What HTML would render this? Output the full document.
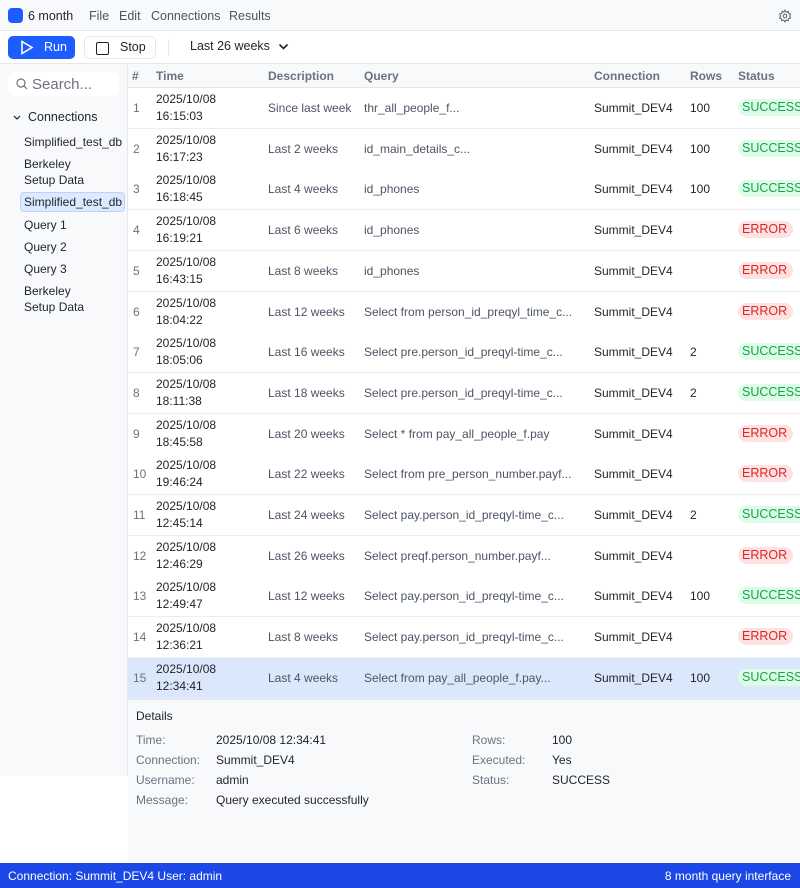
<!DOCTYPE html>
<html><head><meta charset="utf-8"><style>
*{box-sizing:border-box;margin:0;padding:0}
body{width:800px;height:888px;overflow:hidden;font-family:"Liberation Sans",sans-serif;font-size:12px;color:#1f2328;background:#fff;position:relative}
.abs{position:absolute}
#menu{left:0;top:0;width:800px;height:31px;background:#f8f9fb;border-bottom:1px solid #e5e7eb;font-size:12.5px}
#tool{left:0;top:31px;width:800px;height:33px;background:#fff;border-bottom:1px solid #e5e7eb;font-size:12.5px}
#side{left:0;top:64px;width:128px;height:712px;background:#f8f9fb;border-right:1px solid #e5e7eb}
.row{position:absolute;left:128px;width:672px;height:41px;border-bottom:1px solid #eceef1;background:#fff;overflow:hidden}
.row span{position:absolute;white-space:nowrap}
.n{left:5px;color:#6b7280;top:13px}
.t{left:28px;top:3px;line-height:17px}
.d{left:140px;top:13px;color:#4b5563}
.q{left:236px;top:13px;color:#4b5563}
.c{left:466px;top:13px}
.r{left:562px;top:13px}
.s{left:610px;top:11px;padding:1px 6px 1px 4px;border-radius:9px;line-height:15px;font-size:12.5px}
.ok{background:#dcfce7;color:#16a34a}
.er{background:#fee2e2;color:#dc2626}
.si{position:absolute;left:24px;line-height:16px}
.dl{position:absolute;color:#6b7280}
.dv{position:absolute}
</style></head><body>
<div id="menu" class="abs">
<div class="abs" style="left:8px;top:8px;width:15px;height:15px;border-radius:4px;background:#1d5cff"></div>
<div class="abs" style="left:28px;top:9px">6 month</div>
<div class="abs" style="left:89px;top:9px;color:#4b5563">File</div>
<div class="abs" style="left:119px;top:9px;color:#4b5563">Edit</div>
<div class="abs" style="left:151px;top:9px;color:#4b5563">Connections</div>
<div class="abs" style="left:229px;top:9px;color:#4b5563">Results</div>
<svg class="abs" style="left:778px;top:9px" width="14" height="14" viewBox="0 0 24 24" fill="none" stroke="#6b7280" stroke-width="2"><path d="M12 2l2 3 3.5-1 .5 3.5 3.5 1-1.5 3.5 1.5 3.5-3.5 1-.5 3.5-3.5-1-2 3-2-3-3.5 1-.5-3.5-3.5-1L4.5 12 3 8.5l3.5-1L7 4l3.5 1z"/><circle cx="12" cy="12" r="3"/></svg>
</div>
<div id="tool" class="abs">
<div class="abs" style="left:8px;top:5px;width:67px;height:23px;border-radius:5px;background:#1d5cff;color:#fff">
<svg class="abs" style="left:12px;top:4px" width="14" height="15" viewBox="0 0 14 15" fill="none" stroke="#fff" stroke-width="1.6"><path d="M2 1.5l10 6-10 6z"/></svg>
<span class="abs" style="left:36px;top:4px">Run</span></div>
<div class="abs" style="left:84px;top:5px;width:72px;height:23px;border-radius:5px;border:1px solid #e5e7eb;background:#fff">
<div class="abs" style="left:11px;top:5px;width:13px;height:13px;border:1.6px solid #1f2328;border-radius:2px"></div>
<span class="abs" style="left:35px;top:3px">Stop</span></div>
<div class="abs" style="left:168px;top:8px;width:1px;height:17px;background:#e5e7eb"></div>
<div class="abs" style="left:190px;top:8px">Last 26 weeks</div>
<svg class="abs" style="left:278px;top:12px" width="11" height="8" viewBox="0 0 11 8" fill="none" stroke="#1f2328" stroke-width="1.6"><path d="M1.5 1.5l4 4 4-4"/></svg>
</div>
<div id="side" class="abs">
<div class="abs" style="left:8px;top:8px;width:111px;height:24px;border-radius:6px;background:#fff"></div>
<svg class="abs" style="left:16px;top:14px" width="12" height="12" viewBox="0 0 12 12" fill="none" stroke="#6b7280" stroke-width="1.2"><circle cx="5" cy="5" r="4"/><path d="M8 8l3 3"/></svg>
<div class="abs" style="left:32px;top:12px;font-size:15px;color:#6b7280">Search...</div>
<svg class="abs" style="left:13px;top:51px" width="8" height="6" viewBox="0 0 8 6" fill="none" stroke="#1f2328" stroke-width="1.2"><path d="M1 1l3 3 3-3"/></svg>
<div class="abs" style="left:28px;top:46px;font-size:12.5px">Connections</div>
<div class="si" style="top:70px">Simplified_test_db</div>
<div class="si" style="top:92px">Berkeley<br>Setup Data</div>
<div class="abs" style="left:20px;top:128px;width:105px;height:20px;background:#dbeafe;border:1px solid #bcd3f7;border-radius:4px"></div>
<div class="si" style="top:130px">Simplified_test_db</div>
<div class="si" style="top:153px">Query 1</div>
<div class="si" style="top:175px">Query 2</div>
<div class="si" style="top:197px">Query 3</div>
<div class="si" style="top:219px">Berkeley<br>Setup Data</div>
</div>
<div class="abs" style="left:128px;top:64px;width:672px;height:24px;background:#f8f9fb;border-bottom:1px solid #e5e7eb;color:#6b7280;font-weight:bold">
<span class="abs" style="left:4px;top:5px">#</span><span class="abs" style="left:28px;top:5px">Time</span><span class="abs" style="left:140px;top:5px">Description</span><span class="abs" style="left:236px;top:5px">Query</span><span class="abs" style="left:466px;top:5px">Connection</span><span class="abs" style="left:562px;top:5px">Rows</span><span class="abs" style="left:610px;top:5px">Status</span>
</div>
<div class="row" style="top:88px"><span class="n">1</span><span class="t">2025/10/08<br>16:15:03</span><span class="d">Since last week</span><span class="q">thr_all_people_f...</span><span class="c">Summit_DEV4</span><span class="r">100</span><span class="s ok">SUCCESS</span></div>
<div class="row" style="top:128.7px"><span class="n">2</span><span class="t">2025/10/08<br>16:17:23</span><span class="d">Last 2 weeks</span><span class="q">id_main_details_c...</span><span class="c">Summit_DEV4</span><span class="r">100</span><span class="s ok">SUCCESS</span></div>
<div class="row" style="top:169.4px"><span class="n">3</span><span class="t">2025/10/08<br>16:18:45</span><span class="d">Last 4 weeks</span><span class="q">id_phones</span><span class="c">Summit_DEV4</span><span class="r">100</span><span class="s ok">SUCCESS</span></div>
<div class="row" style="top:210.1px"><span class="n">4</span><span class="t">2025/10/08<br>16:19:21</span><span class="d">Last 6 weeks</span><span class="q">id_phones</span><span class="c">Summit_DEV4</span><span class="s er">ERROR</span></div>
<div class="row" style="top:250.8px"><span class="n">5</span><span class="t">2025/10/08<br>16:43:15</span><span class="d">Last 8 weeks</span><span class="q">id_phones</span><span class="c">Summit_DEV4</span><span class="s er">ERROR</span></div>
<div class="row" style="top:291.5px"><span class="n">6</span><span class="t">2025/10/08<br>18:04:22</span><span class="d">Last 12 weeks</span><span class="q">Select from person_id_preqyl_time_c...</span><span class="c">Summit_DEV4</span><span class="s er">ERROR</span></div>
<div class="row" style="top:332.2px"><span class="n">7</span><span class="t">2025/10/08<br>18:05:06</span><span class="d">Last 16 weeks</span><span class="q">Select pre.person_id_preqyl-time_c...</span><span class="c">Summit_DEV4</span><span class="r">2</span><span class="s ok">SUCCESS</span></div>
<div class="row" style="top:372.9px"><span class="n">8</span><span class="t">2025/10/08<br>18:11:38</span><span class="d">Last 18 weeks</span><span class="q">Select pre.person_id_preqyl-time_c...</span><span class="c">Summit_DEV4</span><span class="r">2</span><span class="s ok">SUCCESS</span></div>
<div class="row" style="top:413.6px"><span class="n">9</span><span class="t">2025/10/08<br>18:45:58</span><span class="d">Last 20 weeks</span><span class="q">Select * from pay_all_people_f.pay</span><span class="c">Summit_DEV4</span><span class="s er">ERROR</span></div>
<div class="row" style="top:454.3px"><span class="n">10</span><span class="t">2025/10/08<br>19:46:24</span><span class="d">Last 22 weeks</span><span class="q">Select from pre_person_number.payf...</span><span class="c">Summit_DEV4</span><span class="s er">ERROR</span></div>
<div class="row" style="top:495px"><span class="n">11</span><span class="t">2025/10/08<br>12:45:14</span><span class="d">Last 24 weeks</span><span class="q">Select pay.person_id_preqyl-time_c...</span><span class="c">Summit_DEV4</span><span class="r">2</span><span class="s ok">SUCCESS</span></div>
<div class="row" style="top:535.7px"><span class="n">12</span><span class="t">2025/10/08<br>12:46:29</span><span class="d">Last 26 weeks</span><span class="q">Select preqf.person_number.payf...</span><span class="c">Summit_DEV4</span><span class="s er">ERROR</span></div>
<div class="row" style="top:576.4px"><span class="n">13</span><span class="t">2025/10/08<br>12:49:47</span><span class="d">Last 12 weeks</span><span class="q">Select pay.person_id_preqyl-time_c...</span><span class="c">Summit_DEV4</span><span class="r">100</span><span class="s ok">SUCCESS</span></div>
<div class="row" style="top:617.1px"><span class="n">14</span><span class="t">2025/10/08<br>12:36:21</span><span class="d">Last 8 weeks</span><span class="q">Select pay.person_id_preqyl-time_c...</span><span class="c">Summit_DEV4</span><span class="s er">ERROR</span></div>
<div class="row" style="top:657.8px;background:#dbe8fc"><span class="n">15</span><span class="t">2025/10/08<br>12:34:41</span><span class="d">Last 4 weeks</span><span class="q">Select from pay_all_people_f.pay...</span><span class="c">Summit_DEV4</span><span class="r">100</span><span class="s ok">SUCCESS</span></div>
<div class="abs" style="left:128px;top:699px;width:672px;height:164px;background:#f8f9fb;border-top:1px solid #e5e7eb">
<div class="dv" style="left:8px;top:9px">Details</div>
<div class="dl" style="left:8px;top:33px">Time:</div><div class="dv" style="left:88px;top:33px">2025/10/08 12:34:41</div>
<div class="dl" style="left:8px;top:53px">Connection:</div><div class="dv" style="left:88px;top:53px">Summit_DEV4</div>
<div class="dl" style="left:8px;top:73px">Username:</div><div class="dv" style="left:88px;top:73px">admin</div>
<div class="dl" style="left:8px;top:93px">Message:</div><div class="dv" style="left:88px;top:93px">Query executed successfully</div>
<div class="dl" style="left:344px;top:33px">Rows:</div><div class="dv" style="left:424px;top:33px">100</div>
<div class="dl" style="left:344px;top:53px">Executed:</div><div class="dv" style="left:424px;top:53px">Yes</div>
<div class="dl" style="left:344px;top:73px">Status:</div><div class="dv" style="left:424px;top:73px">SUCCESS</div>
</div>
<div class="abs" style="left:0;top:863px;width:800px;height:25px;background:#1a47e6;color:#fff">
<span class="abs" style="left:8px;top:6px">Connection: Summit_DEV4 User: admin</span>
<span class="abs" style="right:9px;top:6px">8 month query interface</span>
</div>
</body></html>
